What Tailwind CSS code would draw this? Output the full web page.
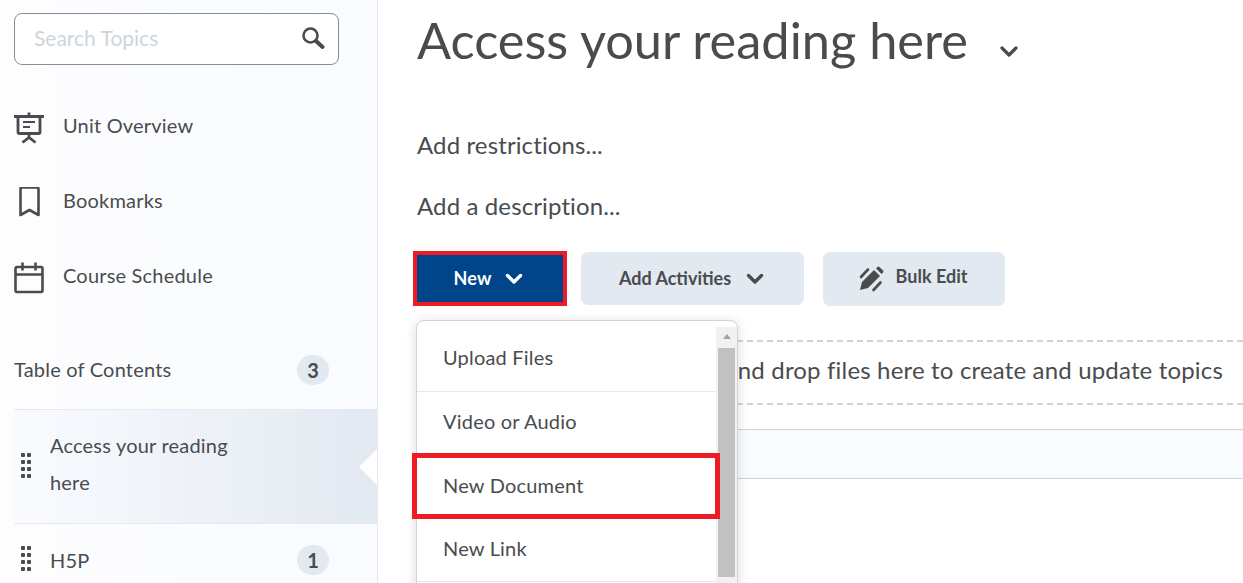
<!DOCTYPE html>
<html lang="en">
  <head>
    <meta charset="UTF-8" />
    <title>Access your reading here</title>
    <script src="https://cdn.jsdelivr.net/npm/@tailwindcss/browser@4"></script>
  </head>
  <body class="h-[583px] w-[1243px] overflow-hidden bg-white font-['Lato',sans-serif] text-[#494c4e]">
    <div class="flex h-[583px]">
      <!-- Sidebar -->
      <aside class="h-[583px] w-[378px] shrink-0 overflow-hidden border-r border-[#e6eaf0] bg-gradient-to-r from-[#fdfdfe] to-[#f9fbff] pt-[13px]">
        <div class="ml-[14px] flex h-[52px] w-[325px] items-center justify-between rounded-[8px] border border-[#868c92] bg-white pl-[19px] pr-[13px]">
          <span class="-mt-[2px] text-[21px] text-[#cdd5dc]">Search Topics</span>
          <svg class="-mt-[2px] h-[24px] w-[24px]" viewBox="0 0 24 24" fill="none" stroke="#494c4e">
            <circle cx="9.500" cy="9.500" r="7" stroke-width="2.600" />
            <path d="M15 15l6.500 6" stroke-width="4" stroke-linecap="round" />
          </svg>
        </div>

        <nav class="mt-[23px] text-[#494c4e]">
          <div class="flex h-[75px] items-center pl-[14px]">
            <svg class="mt-[5px] h-[32px] w-[31px] shrink-0" viewBox="0 0 31 32" fill="none" stroke="#494c4e" stroke-width="2.800">
              <path d="M0 4.500h30M15 0.500V4.500M4 4.500v15.500a1.500 1.500 0 0 0 1.500 1.500h19a1.500 1.500 0 0 0 1.500-1.500V4.500M15 21.500V26M8.500 30.500l6.500-5 6.500 5" />
              <path d="M9 10h12M9 15h7" stroke-width="2.200" />
            </svg>
            <span class="-mt-[2px] ml-[18px] text-[20px] tracking-[0.2px]">Unit Overview</span>
          </div>
          <div class="flex h-[75px] items-center pl-[14px]">
            <svg class="mt-[5px] h-[32px] w-[31px] shrink-0" viewBox="0 0 31 32" fill="none" stroke="#494c4e" stroke-width="2.600" stroke-linejoin="round">
              <path d="M6.500 2a1.500 1.500 0 0 1 1.500-1.500h15a1.500 1.500 0 0 1 1.500 1.500v26l-9-5-9 5z" />
            </svg>
            <span class="-mt-[2px] ml-[18px] text-[20px] tracking-[0.2px]">Bookmarks</span>
          </div>
          <div class="flex h-[75px] items-center pl-[14px]">
            <svg class="mt-[5px] h-[32px] w-[31px] shrink-0" viewBox="0 0 31 32" fill="none" stroke="#494c4e" stroke-width="2.600" stroke-linejoin="round">
              <path d="M3 5h24a1.500 1.500 0 0 1 1.500 1.500v22a1.500 1.500 0 0 1-1.500 1.500H3a1.500 1.500 0 0 1-1.500-1.500V6.500A1.500 1.500 0 0 1 3 5zM1.500 12.500h27M8.500 0.500v8M21.500 0.500v8" />
            </svg>
            <span class="-mt-[2px] ml-[18px] text-[20px] tracking-[0.2px]">Course Schedule</span>
          </div>
        </nav>

        <div class="ml-[14px] mt-[19px] flex h-[78px] items-center justify-between border-b border-[#e6eaf0] pr-[48px]">
          <span class="-mt-[4px] text-[20px] tracking-[0.2px]">Table of Contents</span>
          <span class="-mt-[2px] flex h-[30px] w-[32px] items-center justify-center rounded-full bg-[#e3e9f1] text-[20px] font-bold">3</span>
        </div>

        <!-- Selected module -->
        <div class="relative ml-[14px] flex h-[114px] items-start border-b border-[#e6eaf0] bg-gradient-to-r from-[#f9fbff] to-[#e3e9f1]">
          <div class="ml-[7px] mt-[43px] grid w-[10px] grid-cols-2 gap-x-[2px] gap-y-[3px]">
            <i class="h-[4px] w-[4px] rounded-[1px] bg-[#494c4e]"></i><i class="h-[4px] w-[4px] rounded-[1px] bg-[#494c4e]"></i>
            <i class="h-[4px] w-[4px] rounded-[1px] bg-[#494c4e]"></i><i class="h-[4px] w-[4px] rounded-[1px] bg-[#494c4e]"></i>
            <i class="h-[4px] w-[4px] rounded-[1px] bg-[#494c4e]"></i><i class="h-[4px] w-[4px] rounded-[1px] bg-[#494c4e]"></i>
            <i class="h-[4px] w-[4px] rounded-[1px] bg-[#494c4e]"></i><i class="h-[4px] w-[4px] rounded-[1px] bg-[#494c4e]"></i>
          </div>
          <p class="ml-[19px] mt-[17px] w-[200px] text-[20px] leading-[37px] tracking-[0.2px]">Access your reading here</p>
          <span class="absolute right-0 top-[39px] h-0 w-0 border-y-[18px] border-r-[18px] border-y-transparent border-r-white"></span>
        </div>

        <div class="ml-[14px] flex h-[72px] items-center justify-between pr-[48px]">
          <div class="flex items-center">
            <div class="-mt-[3px] ml-[7px] grid w-[10px] grid-cols-2 gap-x-[2px] gap-y-[3px]">
              <i class="h-[4px] w-[4px] rounded-[1px] bg-[#494c4e]"></i><i class="h-[4px] w-[4px] rounded-[1px] bg-[#494c4e]"></i>
              <i class="h-[4px] w-[4px] rounded-[1px] bg-[#494c4e]"></i><i class="h-[4px] w-[4px] rounded-[1px] bg-[#494c4e]"></i>
              <i class="h-[4px] w-[4px] rounded-[1px] bg-[#494c4e]"></i><i class="h-[4px] w-[4px] rounded-[1px] bg-[#494c4e]"></i>
              <i class="h-[4px] w-[4px] rounded-[1px] bg-[#494c4e]"></i><i class="h-[4px] w-[4px] rounded-[1px] bg-[#494c4e]"></i>
            </div>
            <span class="ml-[19px] text-[20px] tracking-[0.2px]">H5P</span>
          </div>
          <span class="flex h-[30px] w-[32px] items-center justify-center rounded-full bg-[#e3e9f1] text-[20px] font-bold">1</span>
        </div>
      </aside>

      <!-- Main -->
      <main class="relative min-w-0 flex-1">
        <div class="flex h-[84px] items-center pl-[39px]">
          <h1 class="-mt-[3px] text-[50.500px] font-normal leading-none">Access your reading here</h1>
          <svg class="ml-[31px] mt-[19px] h-[14px] w-[20px]" viewBox="0 0 20 14" fill="none" stroke="#494c4e" stroke-width="3.200" stroke-linecap="round" stroke-linejoin="round">
            <path d="M3 3l7 7 7-7" />
          </svg>
        </div>

        <p class="mt-[41px] pl-[39px] text-[24px] leading-[40px] tracking-[0.12px]">Add restrictions...</p>
        <p class="mt-[21px] pl-[39px] text-[24px] leading-[40px] tracking-[0.12px]">Add a description...</p>

        <div class="ml-[35px] mt-[25px] flex items-center">
          <button class="flex h-[55px] w-[154px] items-center justify-center gap-[13px] border-[4px] border-[#ed1c24] bg-[#004489] pr-[4px] text-[18px] font-bold tracking-[0.2px] text-white">
            <span class="-mt-[1px]">New</span>
            <svg class="h-[12px] w-[18px]" viewBox="0 0 18 12" fill="none" stroke="#fff" stroke-width="3.400" stroke-linecap="round" stroke-linejoin="round"><path d="M2.500 2.500L9 9l6.500-6.500" /></svg>
          </button>
          <button class="ml-[14px] flex h-[53px] w-[223px] items-center justify-center gap-[15px] rounded-[7px] bg-[#e3e9f1] pr-[2px] text-[18px] font-bold">
            <span class="-mt-[1px]">Add Activities</span>
            <svg class="h-[12px] w-[18px]" viewBox="0 0 18 12" fill="none" stroke="#494c4e" stroke-width="3.400" stroke-linecap="round" stroke-linejoin="round"><path d="M2.500 2.500L9 9l6.500-6.500" /></svg>
          </button>
          <button class="ml-[19px] flex h-[54px] w-[182px] items-center justify-center gap-[12px] rounded-[7px] bg-[#e3e9f1] pr-[3px] text-[18px] font-bold">
            <svg class="h-[26px] w-[26px]" viewBox="0 0 26 26" fill="#494c4e">
              <path d="M2 24l2-8L16 4l6 6L10 22z" />
              <path d="M18 2.500l1.500-1.500a1.500 1.500 0 0 1 2 0l3.500 3.500a1.500 1.500 0 0 1 0 2L23.500 8z" />
              <path d="M3 11L10 3.500M15.500 24l7-7.500" fill="none" stroke="#494c4e" stroke-width="2.600" stroke-linecap="round" />
            </svg>
            <span class="-mt-[4px]">Bulk Edit</span>
          </button>
        </div>

        <!-- Drop zone -->
        <div class="ml-[39px] mt-[34px] flex h-[65px] items-center justify-end whitespace-nowrap border-y-2 border-dashed border-[#cdd5dc] pb-[6px] pr-[20px] text-[24px] tracking-[0.17px]">
          Drag and drop files here to create and update topics
        </div>
        <div class="ml-[39px] mt-[24px] h-[50px] border-y border-[#cdd5dc] bg-[#f9fbff]"></div>

        <!-- New menu -->
        <div class="absolute left-[38px] top-[320px] h-[290px] w-[322px] overflow-hidden rounded-t-[8px] border border-[#cdd5dc] bg-white shadow-[0_2px_12px_rgba(0,0,0,0.15)]">
          <div class="relative h-full text-[20px] tracking-[0.2px]">
            <div class="flex h-[71px] w-[300px] items-center border-b border-[#e3e9f1] pl-[26px] pt-[2px]">Upload Files</div>
            <div class="flex h-[64px] w-[300px] items-center border-b border-[#e3e9f1] pb-[6px] pl-[26px]">Video or Audio</div>
            <div class="flex h-[63px] w-[300px] items-center border-b border-[#e3e9f1] pb-[5px] pl-[26px]">New Document</div>
            <div class="flex h-[63px] w-[300px] items-center border-b border-[#e3e9f1] pb-[4px] pl-[26px]">New Link</div>
            <!-- Scrollbar -->
            <div class="absolute right-0 top-[6px] flex h-[262px] w-[21px] flex-col items-center bg-[#f1f1f1]">
              <span class="mt-[7px] h-0 w-0 border-x-[4px] border-b-[5px] border-x-transparent border-b-[#a3a3a3]"></span>
              <div class="mt-[9px] h-[229px] w-[17px] bg-[#c1c1c1]"></div>
            </div>
          </div>
        </div>
        <!-- Annotation round New Document -->
        <div class="pointer-events-none absolute left-[34px] top-[453px] h-[66px] w-[308px] border-[5px] border-[#ed1c24]"></div>
      </main>
    </div>
  </body>
</html>
